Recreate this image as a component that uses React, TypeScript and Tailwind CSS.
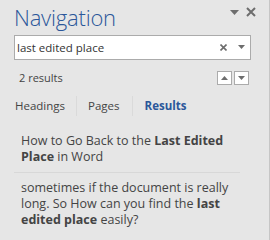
import React from 'react';

const font = { fontFamily: '"Open Sans", "Noto Sans", sans-serif' };

const Caret = ({ up = false }: { up?: boolean }) => (
  <svg width="7" height="4" viewBox="0 0 7 4" className={up ? 'rotate-180' : ''}>
    <path d="M0 0h7L3.5 4z" fill="#6d6d6d" />
  </svg>
);

export default function App() {
  return (
    <div
      className="w-[270px] h-[240px] bg-[#e6e6e6] border-r border-[#c6c6c6] text-[#444444] overflow-hidden"
      style={font}
    >
      {/* header */}
      <div className="flex items-start h-[35px] pl-[14px] pr-[13px]">
        <h1 className="text-[22px] font-light leading-[30px] text-[#2b579a] tracking-[-0.2px] mt-[2px]">
          Navigation
        </h1>
        <div className="ml-auto flex items-center gap-[7px] mt-[7px]">
          <svg width="9" height="5" viewBox="0 0 9 5">
            <path d="M0 0h9L4.5 5z" fill="#6d6d6d" />
          </svg>
          <svg width="10" height="10" viewBox="0 0 10 10">
            <path d="M1 1l8 8M9 1l-8 8" stroke="#6d6d6d" strokeWidth="2" />
          </svg>
        </div>
      </div>

      {/* search box */}
      <div className="mx-[14px] w-[237px] h-[25px] bg-white border border-[#ababab] flex items-center pl-[2px] pr-[5px]">
        <span className="text-[11.5px] text-[#333]">last edited place</span>
        <svg width="7" height="7" viewBox="0 0 7 7" className="ml-auto">
          <path d="M0.5 0.5l6 6M6.5 0.5l-6 6" stroke="#6d6d6d" strokeWidth="1.6" />
        </svg>
        <span className="ml-[11px] mb-[1px]"><Caret /></span>
      </div>

      {/* results count */}
      <div className="flex items-center h-[14px] mt-[11px] pl-[19px] pr-[20px]">
        <span className="text-[11px]">2 results</span>
        <div className="ml-auto flex gap-[2px]">
          <button className="w-[15px] h-[14px] bg-white border border-[#ababab] flex items-center justify-center">
            <Caret up />
          </button>
          <button className="w-[15px] h-[14px] bg-white border border-[#ababab] flex items-center justify-center">
            <Caret />
          </button>
        </div>
      </div>

      {/* tabs */}
      <div className="flex items-center h-[22px] mt-[10px] pl-[15px] text-[11.5px]">
        <span>Headings</span>
        <span className="w-px h-[20px] bg-[#dadada] mx-[11px]" />
        <span>Pages</span>
        <span className="w-px h-[20px] bg-[#dadada] mx-[12px]" />
        <span className="font-bold text-[#2b579a]">Results</span>
      </div>

      {/* results */}
      <div className="mt-[16px] pl-[21px] pr-[28px] text-[12.5px] leading-[16px]">
        <p>
          How to Go Back to the <b>Last Edited Place</b> in Word
        </p>
      </div>
      <div className="mx-[14px] w-[226px] h-px bg-[#d8d8d8] mt-[7px]" />
      <div className="mt-[7px] pl-[21px] pr-[28px] text-[12.5px] leading-[16px]">
        <p>
          sometimes if the document is really long. So How can you find the <b>last edited place</b> easily?
        </p>
      </div>
    </div>
  );
}
